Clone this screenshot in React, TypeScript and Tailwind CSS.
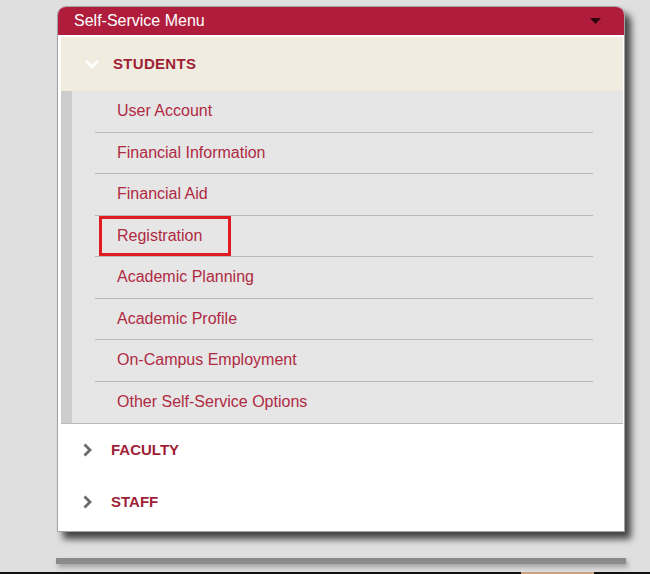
import React from "react";

const STUDENT_LINKS = [
  "User Account",
  "Financial Information",
  "Financial Aid",
  "Registration",
  "Academic Planning",
  "Academic Profile",
  "On-Campus Employment",
  "Other Self-Service Options",
];

const ChevronRight = () => (
  <svg width="11" height="16" viewBox="0 0 11 16" className="shrink-0">
    <path d="M2.5 2.5 L8 8 L2.5 13.5" fill="none" stroke="#6b6b6b" strokeWidth="2.8" />
  </svg>
);

const ChevronDown = () => (
  <svg width="16" height="10" viewBox="0 0 16 10" className="shrink-0">
    <path d="M2 2 L8 8 L14 2" fill="none" stroke="#ffffff" strokeWidth="2.6" />
  </svg>
);

const App = () => {
  return (
    <div className="w-[650px] h-[574px] bg-[#dfdfdf] overflow-hidden flex flex-col font-['Liberation_Sans',Arial,sans-serif]">
      {/* menu panel */}
      <div className="mt-[6px] ml-[57px] w-[568px] h-[526px] bg-white border border-[#a3a3a3] rounded-t-[9px] shadow-[6px_7px_7px_rgba(0,0,0,0.7)] flex flex-col">
        <div className="h-[28px] bg-[#b01d3c] rounded-t-[8px] flex items-center justify-between pl-[16px] pr-[23px]">
          <span className="text-[16px] text-white leading-none">Self-Service Menu</span>
          <svg width="11" height="6" viewBox="0 0 11 6">
            <path d="M0 0 H11 L5.5 6 Z" fill="#2d070d" />
          </svg>
        </div>

        <div className="flex flex-col pl-[3px] pr-[1px] pt-[2px]">
          <div className="h-[54px] bg-[#f0ece0] flex items-center pl-[23px] gap-[13px]">
            <ChevronDown />
            <span className="text-[15px] font-bold tracking-[0.3px] text-[#9e1f36]">STUDENTS</span>
          </div>

          <div className="flex bg-[#e6e6e6] border-b border-[#b9b9b9]">
            <div className="w-[11px] bg-[#cdcdcd]" />
            <ul className="ml-[23px] w-[498px] flex flex-col">
              {STUDENT_LINKS.map((label, idx) => (
                <li
                  key={label}
                  className={`h-[41.5px] flex items-center pl-[22px] ${
                    idx < STUDENT_LINKS.length - 1 ? "border-b border-[#b9b9b9]" : ""
                  }`}
                >
                  <span
                    className={`text-[16px] text-[#b02a42] ${
                      label === "Registration"
                        ? "-ml-[18px] pl-[15px] pr-[26px] py-[5px] border-[3px] border-[#e11b22]"
                        : ""
                    }`}
                  >
                    {label}
                  </span>
                </li>
              ))}
            </ul>
          </div>

          {["FACULTY", "STAFF"].map((label) => (
            <div key={label} className="h-[52px] flex items-center pl-[21px] gap-[18px]">
              <ChevronRight />
              <span className="text-[15px] font-bold text-[#9e1f36]">{label}</span>
            </div>
          ))}
        </div>
      </div>

      {/* lower bar */}
      <div className="mt-[26px] ml-[56px] w-[570px] h-[6px] bg-[#8b8b8b] shadow-[2px_3px_5px_rgba(0,0,0,0.3)]" />

      <div className="flex-1" />
      <div className="h-[2px] bg-[#111] flex">
        <div className="ml-[521px] w-[73px] bg-[#c9a27f]" />
      </div>
    </div>
  );
};

export default App;
